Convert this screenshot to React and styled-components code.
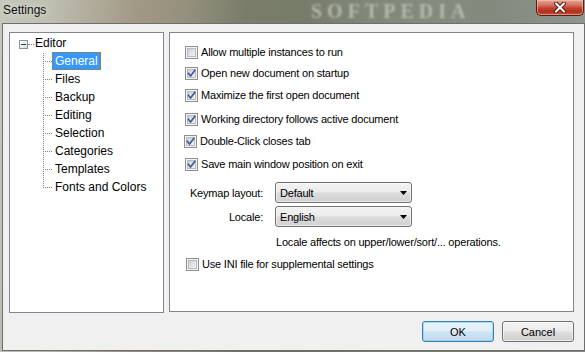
import React from 'react';
import styled, { createGlobalStyle } from 'styled-components';

const Global = createGlobalStyle`
  html, body { margin: 0; padding: 0; }
  body {
    width: 585px;
    height: 352px;
    overflow: hidden;
    background:
      linear-gradient(180deg, rgba(255,255,255,0.06) 0%, rgba(0,0,0,0.04) 100%),
      linear-gradient(90deg, #c3c5ba 0%, #bcbcae 8%, #aba694 16%, #9c917c 24%, #8d8a75 32%, #727561 42%, #6f7461 52%, #778070 62%, #7c8476 72%, #7b8377 84%, #889087 100%);
  }
`;

const Screen = styled.div`
  width: 585px;
  height: 352px;
  display: flex;
  flex-direction: column;
  font-family: "Liberation Sans", Arial, sans-serif;
`;

const TitleBar = styled.div`
  position: relative;
  height: 23px;
  display: flex;
  align-items: flex-start;
  padding-left: 3px;
`;

const Title = styled.div`
  margin-top: 3px;
  font-size: 12px;
  line-height: 15px;
  color: #101010;
  text-shadow: 0 0 6px rgba(255,255,255,0.7);
`;

const Watermark = styled.div`
  position: absolute;
  left: 311px;
  top: 0;
  font-family: "Liberation Serif", serif;
  font-weight: bold;
  font-size: 20px;
  line-height: 22px;
  letter-spacing: 5px;
  color: #c2c5ba;
  opacity: 0.8;
  filter: blur(1.1px);
  pointer-events: none;
`;

const CloseButton = styled.div`
  margin-left: auto;
  margin-right: 1px;
  width: 48px;
  height: 16px;
  box-sizing: border-box;
  border: 1px solid #4f2118;
  border-top: none;
  border-radius: 0 0 5px 5px;
  background: linear-gradient(180deg, #e6a394 0%, #d5715f 35%, #c0412c 55%, #b5301c 80%, #c85a3e 100%);
  box-shadow: inset 0 0 0 1px rgba(255,220,210,0.45);
  display: flex;
  align-items: center;
  justify-content: center;
`;

const Frame = styled.div`
  margin-left: 2px;
  width: 583px;
  height: 328px;
  box-sizing: border-box;
  border: 1px solid #6e6e6e;
  background: #f0f0f0;
  padding: 8px 10px 0 6px;
  display: flex;
  flex-direction: column;
`;

const Content = styled.div`
  display: flex;
  gap: 5px;
  align-items: flex-start;
`;

const TreeBox = styled.div`
  width: 155px;
  height: 281px;
  box-sizing: border-box;
  border: 1px solid #828790;
  background: #ffffff;
  padding-top: 1px;
  font-size: 12px;
  color: #000;
`;

const RootRow = styled.div`
  height: 18px;
  display: flex;
  align-items: flex-start;
  padding-left: 9px;
`;

const Expander = styled.div`
  margin-top: 6px;
  width: 9px;
  height: 9px;
  box-sizing: border-box;
  border: 1px solid #919191;
  background: linear-gradient(135deg, #ffffff 0%, #ececec 60%, #d6d6d6 100%);
  display: flex;
  align-items: center;
  justify-content: center;
  &::after {
    content: "";
    width: 5px;
    height: 1px;
    background: #1b3a7a;
  }
`;

const HLine = styled.div`
  margin-top: 10px;
  width: ${p => p.$w}px;
  height: 0;
  border-top: 1px dotted #808080;
`;

const Label = styled.div`
  height: 18px;
  line-height: 18px;
  padding: 0 3px 0 ${p => p.$pl ?? 3}px;
  box-sizing: border-box;
  white-space: nowrap;
  ${p => p.$selected && `
    background: #3399ff;
    color: #ffffff;
    outline: 1px dotted #cc6600;
    outline-offset: -1px;
  `}
`;

const ChildRow = styled.div`
  height: 18px;
  display: flex;
  padding-left: 33px;
`;

const Connector = styled.div`
  position: relative;
  width: 9px;
  height: 18px;
  flex: none;
  &::before {
    content: "";
    position: absolute;
    left: 0;
    top: 1px;
    height: ${p => (p.$last ? 9 : 17)}px;
    border-left: 1px dotted #808080;
  }
  &::after {
    content: "";
    position: absolute;
    left: 2px;
    top: 9px;
    width: 7px;
    border-top: 1px dotted #808080;
  }
`;

const Panel = styled.div`
  width: 405px;
  height: 280px;
  box-sizing: border-box;
  border: 1px solid #828790;
  background: #ffffff;
  padding: 13px 0 0 15px;
  display: flex;
  flex-direction: column;
  align-items: flex-start;
  font-size: 11px;
  letter-spacing: -0.2px;
  color: #000;
`;

const CheckRow = styled.div`
  height: 13px;
  margin-top: ${p => p.$mt ?? 0}px;
  margin-left: ${p => p.$ml ?? 0}px;
  display: flex;
  align-items: center;
  gap: 3px;
  white-space: nowrap;
  line-height: 13px;
`;

const Box = styled.div`
  width: 13px;
  height: 13px;
  box-sizing: border-box;
  border: 1px solid #8e8f8f;
  background: #f4f4f4;
  padding: 1px;
  flex: none;
  position: relative;
  &::before {
    content: "";
    display: block;
    width: 9px;
    height: 9px;
    box-sizing: border-box;
    border: 1px solid #b8bcc2;
    background: linear-gradient(135deg, #c9cdd2 0%, #e0e2e4 50%, #f2f2f2 100%);
  }
  svg {
    position: absolute;
    left: 0;
    top: 0;
  }
`;

const ComboGrid = styled.div`
  margin-top: 11px;
  margin-left: -15px;
  display: grid;
  grid-template-columns: 93px 137px;
  grid-auto-rows: 21px;
  column-gap: 12px;
  row-gap: 3px;
  align-items: center;
`;

const FieldLabel = styled.div`
  text-align: right;
  white-space: nowrap;
`;

const Combo = styled.div`
  height: 21px;
  box-sizing: border-box;
  border: 1px solid #707070;
  border-radius: 3px;
  background: linear-gradient(180deg, #f3f3f3 0%, #ebebeb 48%, #dddddd 52%, #d0d0d0 100%);
  box-shadow: inset 0 0 0 1px rgba(255,255,255,0.55);
  display: flex;
  align-items: center;
  justify-content: space-between;
  padding: 0 4px 0 4px;
`;

const Note = styled.div`
  margin-top: 9px;
  margin-left: 91px;
  line-height: 13px;
  white-space: nowrap;
`;

const ButtonRow = styled.div`
  margin-top: 8px;
  display: flex;
  justify-content: flex-end;
  gap: 8px;
  padding-right: 0;
`;

const Button = styled.div`
  width: 72px;
  height: 21px;
  box-sizing: border-box;
  border-radius: 3px;
  font-size: 11px;
  display: flex;
  align-items: center;
  justify-content: center;
  color: #000;
  border: 1px solid ${p => (p.$default ? '#3c7fb1' : '#707070')};
  background: ${p =>
    p.$default
      ? 'linear-gradient(180deg, #e9f4fb 0%, #dfeef8 48%, #cde4f3 52%, #c2dbec 100%)'
      : 'linear-gradient(180deg, #f3f3f3 0%, #ebebeb 48%, #dddddd 52%, #d0d0d0 100%)'};
  box-shadow: inset 0 0 0 1px ${p => (p.$default ? 'rgba(120,200,240,0.55)' : 'rgba(255,255,255,0.6)')};
`;

const Check = ({ checked }) => (
  <Box>
    {checked && (
      <svg width="11" height="11" viewBox="0 0 11 11">
        <path d="M2.5 5.5 L4.6 8 L8.8 2.4" fill="none" stroke="#3e5a99" strokeWidth="1.7" strokeLinecap="square" />
      </svg>
    )}
  </Box>
);

const Arrow = () => (
  <svg width="7" height="4" viewBox="0 0 7 4">
    <path d="M0 0 H7 L3.5 4 Z" fill="#000" />
  </svg>
);

const children = ['General', 'Files', 'Backup', 'Editing', 'Selection', 'Categories', 'Templates', 'Fonts and Colors'];

const options = [
  { text: 'Allow multiple instances to run', checked: false, mt: 0 },
  { text: 'Open new document on startup', checked: true, mt: 8 },
  { text: 'Maximize the first open document', checked: true, mt: 9 },
  { text: 'Working directory follows active document', checked: true, mt: 11 },
  { text: 'Double-Click closes tab', checked: true, mt: 9, ml: -1 },
  { text: 'Save main window position on exit', checked: true, mt: 10 },
];

export default function App() {
  return (
    <>
      <Global />
      <Screen>
        <TitleBar>
          <Title>Settings</Title>
          <Watermark>SOFTPEDIA</Watermark>
          <CloseButton>
            <svg width="14" height="11" viewBox="0 0 14 11">
              <path d="M3 1.5 L11 9.5 M11 1.5 L3 9.5" stroke="#5a2016" strokeWidth="4" strokeLinecap="round" />
              <path d="M3 1.5 L11 9.5 M11 1.5 L3 9.5" stroke="#ffffff" strokeWidth="2" strokeLinecap="round" />
            </svg>
          </CloseButton>
        </TitleBar>
        <Frame>
          <Content>
            <TreeBox>
              <RootRow>
                <Expander />
                <HLine $w={6} />
                <Label $pl={1}>Editor</Label>
              </RootRow>
              {children.map((c, i) => (
                <ChildRow key={c}>
                  <Connector $last={i === children.length - 1} />
                  <Label $selected={i === 0}>{c}</Label>
                </ChildRow>
              ))}
            </TreeBox>
            <Panel>
              {options.map(o => (
                <CheckRow key={o.text} $mt={o.mt} $ml={o.ml}>
                  <Check checked={o.checked} />
                  <span>{o.text}</span>
                </CheckRow>
              ))}
              <ComboGrid>
                <FieldLabel>Keymap layout:</FieldLabel>
                <Combo>
                  <span>Default</span>
                  <Arrow />
                </Combo>
                <FieldLabel>Locale:</FieldLabel>
                <Combo>
                  <span>English</span>
                  <Arrow />
                </Combo>
              </ComboGrid>
              <Note>Locale affects on upper/lower/sort/... operations.</Note>
              <CheckRow $mt={9} $ml={1}>
                <Check checked={false} />
                <span>Use INI file for supplemental settings</span>
              </CheckRow>
            </Panel>
          </Content>
          <ButtonRow>
            <Button $default>OK</Button>
            <Button>Cancel</Button>
          </ButtonRow>
        </Frame>
      </Screen>
    </>
  );
}
